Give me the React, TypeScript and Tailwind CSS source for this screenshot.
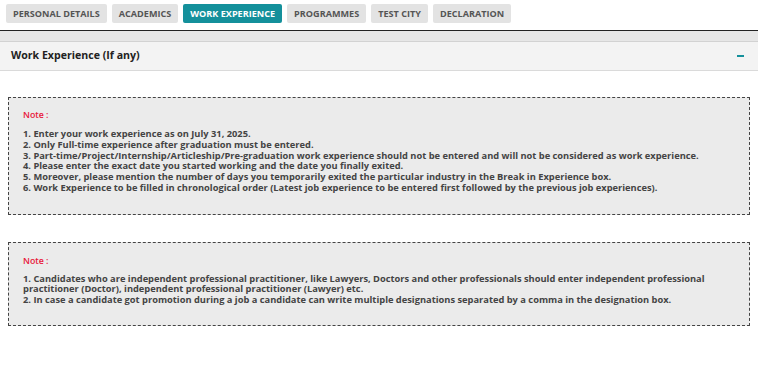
import React from "react";

const tabs = ["PERSONAL DETAILS", "ACADEMICS", "WORK EXPERIENCE", "PROGRAMMES", "TEST CITY", "DECLARATION"];

function NoteBox({ children, className }: { children: React.ReactNode; className?: string }) {
  return (
    <div className={"mx-2 border border-dashed border-[#444] bg-[#ebebeb] px-[14px] " + (className || "")}>
      <div className="text-[8.8px] font-semibold text-[#e8173a] leading-[11px]">Note :</div>
      {children}
    </div>
  );
}

export default function App() {
  return (
    <div className="w-[758px] h-[365px] bg-white overflow-hidden" style={{ fontFamily: '"Open Sans", sans-serif' }}>
      <div className="flex gap-[5px] pl-[6px] pt-[4px]">
        {tabs.map((t) => (
          <div
            key={t}
            className={
              "h-[19px] px-[7px] flex items-center text-[9.1px] font-bold rounded-[2px] " +
              (t === "WORK EXPERIENCE" ? "bg-[#14909b] text-white" : "bg-[#e3e3e3] text-[#555]")
            }
          >
            {t}
          </div>
        ))}
      </div>
      <div className="mt-[7px] border-t-[1.5px] border-[#222]" />
      <div className="h-[11px] bg-[#e6e6e6] border-b border-[#d2d2d2]" />
      <div className="h-[29px] bg-[#f3f3f3] border-b border-[#dadada] flex items-center justify-between pl-[11px] pr-[14px]">
        <span className="text-[10.6px] font-bold text-[#222]">Work Experience (If any)</span>
        <span className="w-[7px] h-[2.5px] bg-[#14909b]" />
      </div>
      <NoteBox className="mt-[26px] pt-[12px] pb-[20px]">
        <p className="mt-[8px] text-[9.3px] font-bold text-[#444] leading-[10.8px]">
          1. Enter your work experience as on July 31, 2025.
          <br />
          2. Only Full-time experience after graduation must be entered.
          <br />
          3. Part-time/Project/Internship/Articleship/Pre-graduation work experience should not be entered and will not be considered as work experience.
          <br />
          4. Please enter the exact date you started working and the date you finally exited.
          <br />
          5. Moreover, please mention the number of days you temporarily exited the particular industry in the Break in Experience box.
          <br />
          6. Work Experience to be filled in chronological order (Latest job experience to be entered first followed by the previous job experiences).
        </p>
      </NoteBox>
      <NoteBox className="mt-[27px] pt-[13px] pb-[19px]">
        <p className="mt-[7px] text-[9.3px] font-bold text-[#444] leading-[10.6px]">
          1. Candidates who are independent professional practitioner, like Lawyers, Doctors and other professionals should enter independent professional practitioner (Doctor), independent professional practitioner (Lawyer) etc.
          <br />
          2. In case a candidate got promotion during a job a candidate can write multiple designations separated by a comma in the designation box.
        </p>
      </NoteBox>
    </div>
  );
}
